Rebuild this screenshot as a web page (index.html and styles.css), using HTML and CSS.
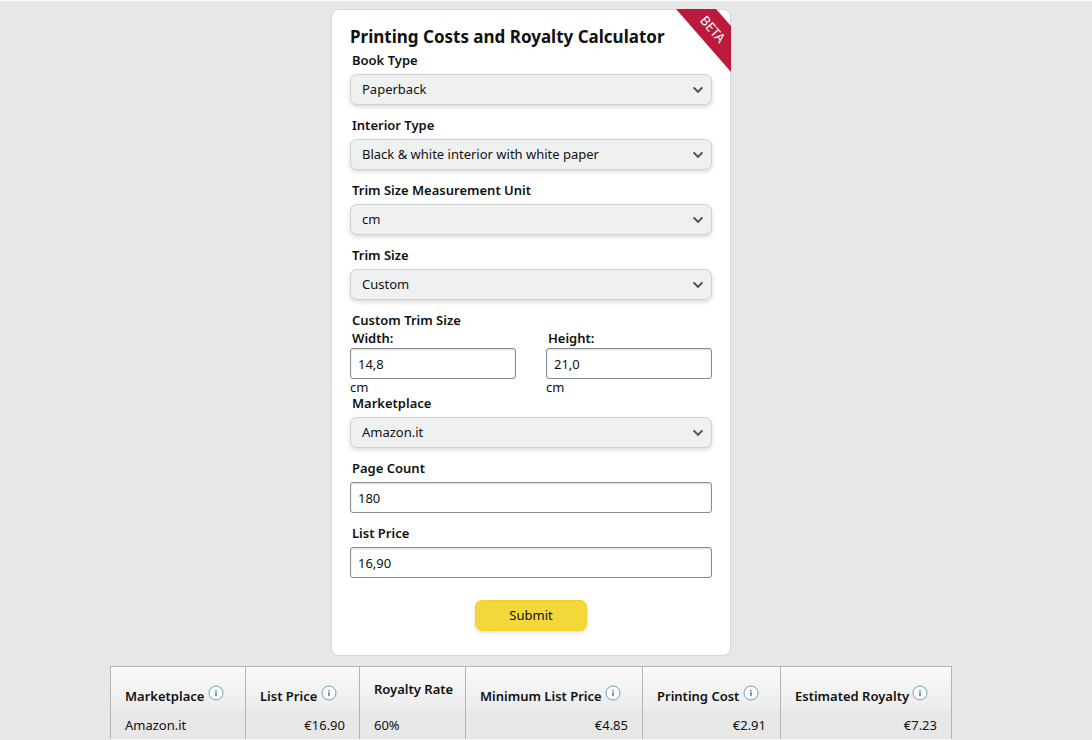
FILE: index.html
```html
<!DOCTYPE html>
<html lang="en">
<head>
  <meta charset="UTF-8">
  <meta name="viewport" content="width=device-width, initial-scale=1.0">
  <title>Printing Costs and Royalty Calculator</title>
  <link rel="stylesheet" href="styles.css">
</head>
<body>
  <svg class="sprite" aria-hidden="true">
    <symbol id="icon-info" viewBox="0 0 16 16">
      <circle cx="8" cy="8" r="7" fill="#fff" stroke="#6f9fc0"></circle>
      <path d="M7.5 5h1v1h-1zM7.5 7h1v4h-1z" fill="#2a6f9f" stroke="#2a6f9f" stroke-width="0.3"></path>
    </symbol>
    <symbol id="icon-chevron" viewBox="0 0 12 8">
      <path d="M1.6 1.4 6 5.9l4.4-4.5" fill="none" stroke="#4a4f4f" stroke-width="2"></path>
    </symbol>
  </svg>

  <main class="page">
    <form class="card">
      <svg class="ribbon" viewBox="0 0 55 63" role="img" aria-label="Beta">
        <path d="M0 0h40l15 17v46z" fill="#bb1a3d"></path>
        <text class="ribbon-text" transform="translate(37 20) rotate(49)" text-anchor="middle" dy="5">BETA</text>
      </svg>

      <h1>Printing Costs and Royalty Calculator</h1>

      <div class="field">
        <label for="book-type">Book Type</label>
        <div class="select">
          <select id="book-type"><option>Paperback</option></select>
          <svg class="chevron"><use href="#icon-chevron"></use></svg>
        </div>
      </div>

      <div class="field">
        <label for="interior-type">Interior Type</label>
        <div class="select">
          <select id="interior-type"><option>Black &amp; white interior with white paper</option></select>
          <svg class="chevron"><use href="#icon-chevron"></use></svg>
        </div>
      </div>

      <div class="field">
        <label for="unit">Trim Size Measurement Unit</label>
        <div class="select">
          <select id="unit"><option>cm</option></select>
          <svg class="chevron"><use href="#icon-chevron"></use></svg>
        </div>
      </div>

      <div class="field">
        <label for="trim-size">Trim Size</label>
        <div class="select">
          <select id="trim-size"><option>Custom</option></select>
          <svg class="chevron"><use href="#icon-chevron"></use></svg>
        </div>
      </div>

      <fieldset class="custom-size">
        <legend>Custom Trim Size</legend>
        <div class="sizes">
          <div class="size">
            <label for="width">Width:</label>
            <input type="text" id="width" value="14,8">
            <span class="unit">cm</span>
          </div>
          <div class="size">
            <label for="height">Height:</label>
            <input type="text" id="height" value="21,0">
            <span class="unit">cm</span>
          </div>
        </div>
      </fieldset>

      <div class="field">
        <label for="marketplace">Marketplace</label>
        <div class="select">
          <select id="marketplace"><option>Amazon.it</option></select>
          <svg class="chevron"><use href="#icon-chevron"></use></svg>
        </div>
      </div>

      <div class="field">
        <label for="page-count">Page Count</label>
        <input type="text" id="page-count" value="180">
      </div>

      <div class="field">
        <label for="list-price">List Price</label>
        <input type="text" id="list-price" value="16,90">
      </div>

      <button type="submit" class="submit">Submit</button>
    </form>

    <table class="results">
      <colgroup>
        <col class="col-marketplace">
        <col class="col-price">
        <col class="col-rate">
        <col class="col-minimum">
        <col class="col-cost">
        <col class="col-royalty">
      </colgroup>
      <thead>
        <tr>
          <th>Marketplace <svg class="info"><use href="#icon-info"></use></svg></th>
          <th>List Price <svg class="info"><use href="#icon-info"></use></svg></th>
          <th class="plain">Royalty Rate</th>
          <th>Minimum List Price <svg class="info"><use href="#icon-info"></use></svg></th>
          <th>Printing Cost <svg class="info"><use href="#icon-info"></use></svg></th>
          <th>Estimated Royalty <svg class="info"><use href="#icon-info"></use></svg></th>
        </tr>
      </thead>
      <tbody>
        <tr>
          <td>Amazon.it</td>
          <td class="amount">€16.90</td>
          <td>60%</td>
          <td class="amount">€4.85</td>
          <td class="amount">€2.91</td>
          <td class="amount">€7.23</td>
        </tr>
      </tbody>
    </table>
  </main>
</body>
</html>
```
FILE: styles.css
```css
*, *::before, *::after {
  box-sizing: border-box;
  margin: 0;
  padding: 0;
}

body {
  font-family: "Noto Sans", "Open Sans", sans-serif;
  font-size: 13px;
  line-height: 18px;
  color: #0f1111;
  background: #e7e7e7;
  border-top: 1px solid #f8f8f8;
}

.sprite {
  display: none;
}

.page {
  display: flex;
  flex-direction: column;
  align-items: center;
  gap: 10px;
  padding: 8px 30px 0 0;
}

.card {
  position: relative;
  display: flex;
  flex-direction: column;
  width: 100%;
  max-width: 400px;
  padding: 14px 18px 24px;
  background: #fff;
  border: 1px solid #d5d9d9;
  border-radius: 8px;
}

h1 {
  font-size: 17px;
  line-height: 26px;
  margin-bottom: 1px;
  white-space: nowrap;
}

label,
legend {
  display: block;
  padding: 0 2px 5px;
  font-weight: 600;
}

.field {
  margin-bottom: 11px;
}

.select {
  position: relative;
}

select,
input {
  display: block;
  width: 100%;
  height: 31px;
  font: inherit;
  color: inherit;
}

select {
  appearance: none;
  padding: 0 32px 2px 11px;
  background: #eff1f1;
  border: 1px solid #cdd2d2;
  border-radius: 7px;
  box-shadow: 0 2px 4px rgba(15, 17, 17, 0.16);
}

.chevron {
  position: absolute;
  top: 12px;
  right: 8px;
  width: 12px;
  height: 8px;
  pointer-events: none;
}

input {
  padding: 0 7px;
  background: #fff;
  border: 1px solid #888c8c;
  border-radius: 3px;
  box-shadow: inset 0 1px 2px rgba(15, 17, 17, 0.15);
}

.custom-size {
  border: none;

  legend,
  label {
    padding-bottom: 0;
  }

  label {
    margin-bottom: 1px;
  }
}

.sizes {
  display: grid;
  grid-template-columns: 1fr 1fr;
  gap: 30px;
}

.unit {
  display: block;
  height: 15px;
  line-height: 17px;
}

.submit {
  align-self: center;
  width: 112px;
  height: 31px;
  margin-top: 11px;
  padding-bottom: 2px;
  font: inherit;
  color: inherit;
  background: #f4d839;
  border: 1px solid #f2d02c;
  border-radius: 7px;
  box-shadow: 0 2px 4px rgba(15, 17, 17, 0.12);
  cursor: pointer;
}

.ribbon {
  position: absolute;
  top: -1px;
  right: -1px;
  width: 55px;
  height: 63px;
}

.ribbon-text {
  font-size: 13px;
  fill: #fff;
}

.results {
  width: 100%;
  max-width: 841px;
  table-layout: fixed;
  border-collapse: collapse;
  border-top: 1px solid #b4b4b4;

  th,
  td {
    padding: 0 14px;
    border-left: 1px solid #b4b4b4;
    border-right: 1px solid #b4b4b4;
    text-align: left;
    white-space: nowrap;
  }

  thead {
    background: linear-gradient(#f9f9f9, #ececec);
  }

  th {
    height: 44px;
    padding-top: 12px;
    font-weight: 600;
    vertical-align: middle;
  }

  .plain {
    padding-top: 0;
  }

  td {
    height: 29px;
    border-bottom: 1px solid #f8f8f8;
  }

  .amount {
    text-align: right;
  }
}

.info {
  width: 16px;
  height: 16px;
}

.col-marketplace {
  width: 135px;
}

.col-price {
  width: 114px;
}

.col-rate {
  width: 106px;
}

.col-minimum {
  width: 177px;
}

.col-cost {
  width: 138px;
}

.col-royalty {
  width: 171px;
}
```
